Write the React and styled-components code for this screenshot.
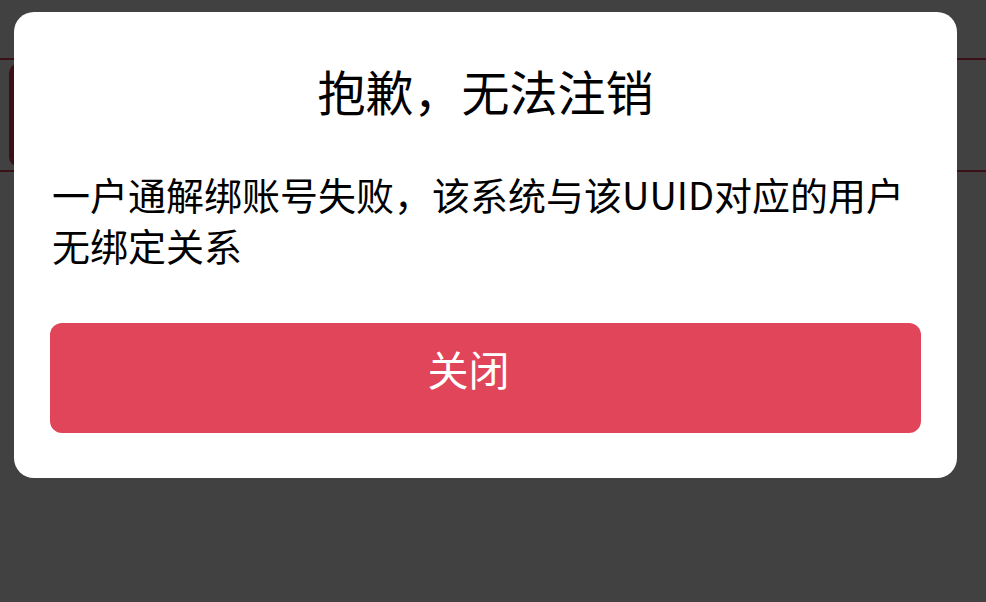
import styled, { createGlobalStyle } from "styled-components";

const GlobalStyle = createGlobalStyle`
  html, body {
    margin: 0;
    padding: 0;
    background: #ffffff;
    font-family: "Noto Sans CJK SC", "Noto Sans", sans-serif;
  }
`;

const Page = styled.div`
  height: 602px;
  overflow: hidden;
  padding-top: 58px;
  box-sizing: border-box;
`;

const InfoStrip = styled.div`
  height: 114px;
  box-sizing: border-box;
  border-top: 2px solid #e14559;
  border-bottom: 2px solid #e14559;
  display: flex;
  align-items: center;
  padding-left: 9px;
`;

const Tag = styled.div`
  width: 200px;
  height: 104px;
  border-radius: 10px;
  background: #e14559;
`;

const Mask = styled.div`
  position: fixed;
  inset: 0;
  background: rgba(0, 0, 0, 0.745);
`;

const Dialog = styled.div`
  position: fixed;
  top: 12px;
  left: 14px;
  width: 943px;
  height: 466px;
  box-sizing: border-box;
  background: #ffffff;
  border-radius: 20px;
  padding: 45px 36px 45px;
  display: flex;
  flex-direction: column;
`;

const Title = styled.h2`
  margin: 0;
  text-align: center;
  font-size: 48px;
  line-height: 67px;
  font-weight: 400;
  color: #000000;
`;

const Message = styled.p`
  margin: 44px 0 0;
  padding: 0 2px;
  font-size: 38px;
  line-height: 51px;
  color: #000000;
`;

const CloseButton = styled.button`
  margin-top: auto;
  height: 110px;
  padding: 0 34px 20px 0;
  border: none;
  border-radius: 12px;
  background: #e14559;
  color: #ffffff;
  font-family: inherit;
  font-size: 41px;
  cursor: pointer;
`;

export default function App() {
  return (
    <>
      <GlobalStyle />
      <Page>
        <InfoStrip>
          <Tag />
        </InfoStrip>
      </Page>
      <Mask />
      <Dialog>
        <Title>抱歉，无法注销</Title>
        <Message>一户通解绑账号失败，该系统与该UUID对应的用户无绑定关系</Message>
        <CloseButton>关闭</CloseButton>
      </Dialog>
    </>
  );
}
